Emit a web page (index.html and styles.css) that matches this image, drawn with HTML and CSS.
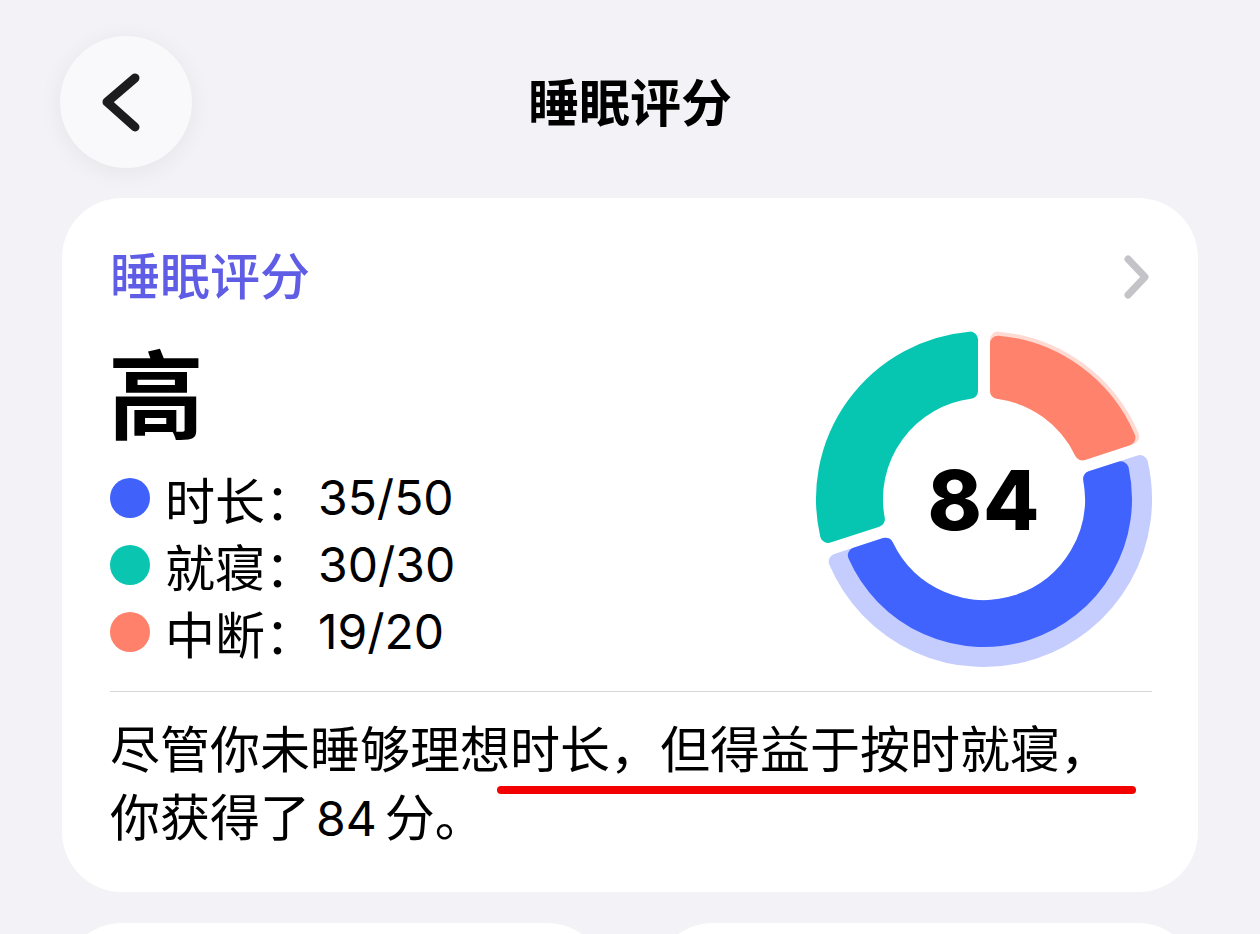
FILE: index.html
```html
<!DOCTYPE html>
<html lang="zh-CN">

<head>
    <meta charset="UTF-8">
    <meta name="viewport" content="width=device-width, initial-scale=1.0">
    <title>睡眠评分</title>
    <link rel="stylesheet" href="styles.css">
</head>

<body>
    <div class="screen">
        <header class="topbar">
            <button class="back-btn" aria-label="返回">
                <svg viewBox="0 0 132 132" width="132" height="132">
                    <polyline points="75,42 47,66 75,91" />
                </svg>
            </button>
            <h1 class="title">睡眠评分</h1>
            <span></span>
        </header>

        <section class="card score-card">
            <div class="card-head">
                <span class="card-label">睡眠评分</span>
                <svg class="chev" viewBox="0 0 32 48" width="32" height="48">
                    <polyline points="8,6 25,24 8,42" />
                </svg>
            </div>

            <div class="score-body">
                <div class="score-info">
                    <div class="level">高</div>
                    <ul class="legend">
                        <li><span class="dot dot-blue"></span>时长：<span class="num">35/50</span></li>
                        <li><span class="dot dot-teal"></span>就寝：<span class="num">30/30</span></li>
                        <li><span class="dot dot-red"></span>中断：<span class="num">19/20</span></li>
                    </ul>
                </div>

                <!-- 外圈浅色 = 满分, 实心 = 得分 -->
                <svg class="donut" viewBox="0 0 340 340" width="340" height="340">
                    <path class="seg red-bg" d="M184 10.61 A160 160 0 0 1 317.26 107.44 L268.48 123.28 A109 109 0 0 0 184 61.9 Z" />
                    <path class="seg red" d="M184 14.63 A156 156 0 0 1 313.44 108.68 L268.48 123.28 A109 109 0 0 0 184 61.9 Z" />
                    <path class="seg blue-bg" d="M325.92 134.06 A160 160 0 0 1 22.74 232.56 L71.52 216.72 A109 109 0 0 0 277.14 149.9 Z" />
                    <path class="seg blue" d="M306.81 140.26 A140 140 0 0 1 41.85 226.36 L71.52 216.72 A109 109 0 0 0 277.14 149.9 Z" />
                    <path class="seg teal" d="M14.08 205.94 A160 160 0 0 1 156 10.61 L156 61.9 A109 109 0 0 0 62.86 190.1 Z" />
                    <text class="donut-num" x="170" y="171" text-anchor="middle" dominant-baseline="central">84</text>
                </svg>
            </div>

            <hr class="divider">

            <p class="summary">尽管你未睡够理想时长，但得益于按时就寝，<br>你获得了<span class="score">84</span>分。<span class="mark"></span></p>
        </section>

        <div class="more-cards">
            <div class="card small"></div>
            <div class="card small"></div>
        </div>
    </div>
</body>

</html>
```

FILE: styles.css
```css
body {
    margin: 0;
    padding: 0;
    background: #f2f2f7;
    font-family: Inter, "Noto Sans CJK SC", sans-serif;
    color: #000;
    overflow: hidden;
}

.screen {
    width: 1260px;
    height: 934px;
    padding: 36px 62px 0;
    box-sizing: border-box;
    overflow: hidden;
}

.topbar {
    display: grid;
    grid-template-columns: 1fr auto 1fr;
    align-items: center;
    height: 132px;
}

.back-btn {
    width: 132px;
    height: 132px;
    margin-left: -2px;
    padding: 0;
    border: none;
    border-radius: 50%;
    background: #f9f9fc;
    box-shadow: 0 4px 24px rgba(0, 0, 0, 0.06);
}

.back-btn svg {
    display: block;
}

.back-btn polyline {
    fill: none;
    stroke: #1c1c1e;
    stroke-width: 9;
    stroke-linecap: round;
    stroke-linejoin: round;
}

.title {
    margin: 0;
    font-size: 51px;
    font-weight: 700;
    line-height: 58px;
    padding-top: 4px;
}

.card {
    background: #fff;
    border-radius: 60px;
}

.score-card {
    margin-top: 30px;
    padding: 50px 46px 39px 48px;
}

.card-head {
    display: flex;
    justify-content: space-between;
    align-items: center;
    height: 58px;
}

.card-label {
    font-size: 50px;
    line-height: 58px;
    font-weight: 500;
    color: #5f5ce6;
}

.chev polyline {
    fill: none;
    stroke: #c4c4c8;
    stroke-width: 7;
    stroke-linecap: round;
    stroke-linejoin: round;
}

.score-body {
    display: flex;
    justify-content: space-between;
    align-items: flex-start;
}

.score-info {
    margin-top: 35px;
}

.level {
    font-size: 96px;
    font-weight: 700;
    line-height: 110px;
    margin-left: -2px;
}

.legend {
    list-style: none;
    margin: 13px 0 0;
    padding: 0;
}

.legend li {
    display: flex;
    align-items: center;
    height: 67px;
    font-size: 50px;
}

.dot {
    width: 40px;
    height: 40px;
    border-radius: 50%;
    margin-right: 15px;
}

.dot-blue {
    background: #4062fb;
}

.dot-teal {
    background: #0ac6b1;
}

.dot-red {
    background: #ff816b;
}

.num {
    margin-left: 3px;
    font-size: 48px;
}

.donut {
    margin-top: 23px;
    margin-right: -2px;
}

.seg {
    stroke-width: 16;
    stroke-linejoin: round;
}

.red-bg {
    fill: #ffdad3;
    stroke: #ffdad3;
}

.red {
    fill: #ff836c;
    stroke: #ff836c;
}

.blue-bg {
    fill: #c4cdfd;
    stroke: #c4cdfd;
}

.blue {
    fill: #4163fd;
    stroke: #4163fd;
}

.teal {
    fill: #06c6b1;
    stroke: #06c6b1;
}

.donut-num {
    font-family: Inter, sans-serif;
    font-size: 82px;
    font-weight: 800;
    letter-spacing: 1px;
}

.divider {
    margin: 22px 0 0;
    border: none;
    height: 1px;
    background: #d6d6da;
}

.summary {
    position: relative;
    margin: 24px 0 0;
    font-size: 50px;
    line-height: 68px;
}

.summary .score {
    font-size: 48px;
    margin: 0 8px 0 6px;
}

/* 红色标注线 */
.mark {
    position: absolute;
    left: 387px;
    top: 70px;
    width: 639px;
    height: 8px;
    border-radius: 4px;
    background: #f40000;
}

.more-cards {
    display: grid;
    grid-template-columns: 1fr 1fr;
    gap: 46px;
    margin-top: 31px;
}

.small {
    height: 200px;
}
```
